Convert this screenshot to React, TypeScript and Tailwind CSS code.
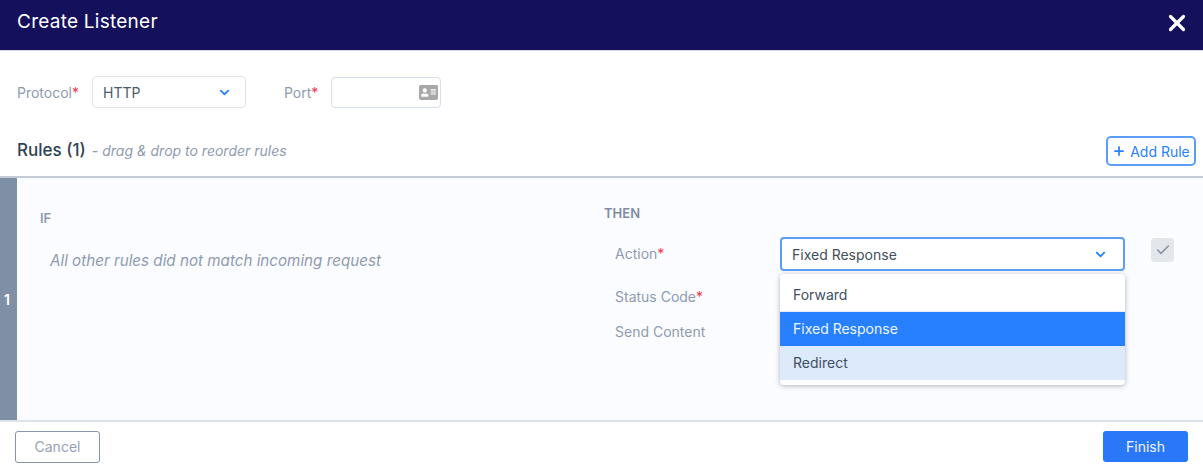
import { Check, Plus, X } from "lucide-react";
import { FaAddressCard, FaChevronDown } from "react-icons/fa";

const Required = () => <span className="text-[#f5364f]">*</span>;

const App = () => {
	return (
		<div className="w-[1203px] h-[465px] flex flex-col bg-white overflow-hidden font-['Inter','Noto_Sans',sans-serif] text-[#37475a]">
			{/* Header */}
			<div className="h-[51px] shrink-0 flex items-center justify-between pl-[17px] pr-[13px] pb-[5px] bg-[#14105c] border-b border-[#d5dae2]">
				<h2 className="text-[19px] text-white tracking-[0.25px]">Create Listener</h2>
				<X size={26} strokeWidth={3} className="text-white" />
			</div>

			{/* Protocol / Port */}
			<div className="h-[32px] mt-[25px] shrink-0 flex items-center pl-[17px] text-[14px]">
				<label className="w-[75px] text-[#8e9bb0]">Protocol<Required /></label>
				<div className="w-[154px] h-[32px] flex items-center justify-between pl-[10px] pr-[15px] bg-white border border-[#dfe3e8] rounded-[4px] text-[#4a5a6c]">
					HTTP
					<FaChevronDown size={11} className="text-[#2680ff]" />
				</div>
				<label className="ml-[38px] w-[47px] text-[#8e9bb0]">Port<Required /></label>
				<div className="w-[110px] h-[31px] mt-[1px] flex items-center justify-end pr-[2px] bg-white border border-[#d5e0ee] rounded-[4px]">
					<FaAddressCard size={19} className="text-[#a8a8a8]" />
				</div>
			</div>

			{/* Rules title */}
			<div className="h-[30px] mt-[28px] shrink-0 flex items-center justify-between pl-[17px] pr-[7px]">
				<p className="flex items-baseline gap-[6px]">
					<span className="text-[17px] font-medium text-[#2f4254]">Rules (1)</span>
					<span className="text-[14px] italic text-[#8e9bb0]">- drag &amp; drop to reorder rules</span>
				</p>
				<button className="w-[90px] h-[30px] flex items-center justify-center gap-[4px] bg-white border-2 border-[#5c9dfa] rounded-[5px] text-[14px] text-[#2680ff]">
					<Plus size={14} strokeWidth={3} />
					Add Rule
				</button>
			</div>

			{/* Rule row */}
			<div className="h-[246px] mt-[10px] shrink-0 flex bg-[#fbfcff] border-t-2 border-b-2 border-t-[#c5cbd5] border-b-[#dde3ea]">
				<div className="w-[17px] shrink-0 flex items-center justify-center pr-[3px] bg-[#7f8fa6] text-[14px] font-semibold text-white">1</div>

				{/* IF */}
				<div className="w-[587px] shrink-0 pl-[23px] pt-[32px]">
					<p className="text-[13px] leading-[16px] font-semibold text-[#8e9bb0]">IF</p>
					<p className="mt-[25px] pl-[10px] text-[15.2px] leading-[20px] italic text-[#8e9bb0]">All other rules did not match incoming request</p>
				</div>

				{/* THEN */}
				<div className="flex-1 pt-[27px]">
					<p className="text-[13px] leading-[16px] font-semibold text-[#7f8da3]">THEN</p>
					<div className="mt-[16px] flex items-start">
						<div className="w-[176px] shrink-0 pl-[11px] text-[14px] text-[#8e9bb0]">
							<p className="h-[33px] leading-[33px]">Action<Required /></p>
							<p className="mt-[10px] h-[33px] leading-[33px]">Status Code<Required /></p>
							<p className="mt-[2px] h-[33px] leading-[33px]">Send Content</p>
						</div>
						<div className="relative w-[345px] shrink-0">
							<div className="h-[34px] flex items-center justify-between pl-[10px] pr-[17px] bg-white border-2 border-[#5c9dfa] rounded-[4px] text-[14px] text-[#3f4f60]">
								Fixed Response
								<FaChevronDown size={11} className="text-[#2680ff]" />
							</div>
							{/* Dropdown menu */}
							<div className="absolute left-0 top-[37px] w-[345px] h-[111px] pt-[4px] bg-white rounded-[4px] shadow-[0_1px_5px_rgba(60,70,90,0.4)] text-[14px] text-[#3f4f60]">
								<div className="h-[34px] flex items-center px-[13px] border-b border-[#e4ebf5]">Forward</div>
								<div className="h-[34px] flex items-center px-[13px] pb-[1px] bg-[#2680ff] text-[#eef5ff]">Fixed Response</div>
								<div className="h-[34px] flex items-center px-[13px] pb-[1px] bg-[#dceafc]">Redirect</div>
							</div>
						</div>
						<div className="ml-[26px] mt-[1px] w-[23px] h-[24px] flex items-center justify-center bg-[#e3e6ea] rounded-[4px]">
							<Check size={16} strokeWidth={2.5} className="text-[#8a96a8]" />
						</div>
					</div>
				</div>
			</div>

			{/* Footer */}
			<div className="flex-1 flex items-center justify-between pl-[15px] pr-[15px] pt-[6px]">
				<button className="w-[85px] h-[32px] bg-white border border-[#8794a8] rounded-[3px] text-[14px] text-[#95a2b5]">Cancel</button>
				<button className="w-[85px] h-[31px] bg-[#2a78fa] rounded-[3px] text-[14px] text-[#eef5ff]">Finish</button>
			</div>
		</div>
	);
};

export default App;
